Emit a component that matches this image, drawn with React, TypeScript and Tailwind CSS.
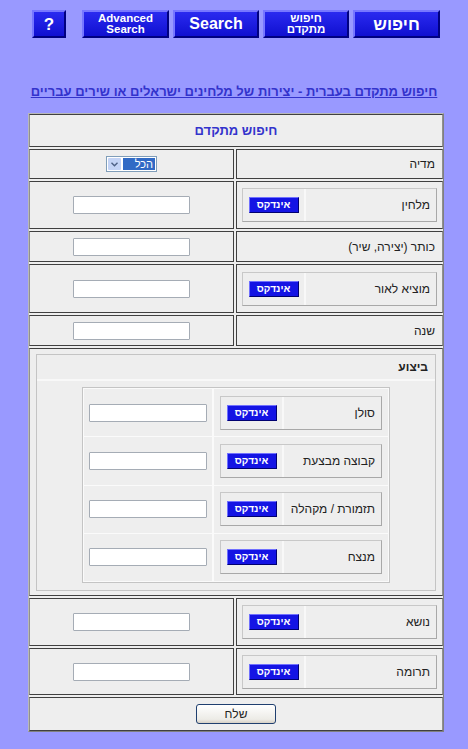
import React from "react"

const font = { fontFamily: '"Liberation Sans", Arial, "DejaVu Sans", sans-serif' }

function NavButton({ children, className = "" }: { children: React.ReactNode; className?: string }) {
  return (
    <div
      className={
        "flex h-[28px] flex-col items-center justify-center border-2 border-t-[#7777ff] border-l-[#7777ff] border-b-[#000080] border-r-[#000080] bg-[linear-gradient(#2a2af0,#1010d0)] font-bold text-white " +
        className
      }
    >
      {children}
    </div>
  )
}

function IndexButton() {
  return (
    <span className="flex h-[16px] w-[50px] items-center justify-center border border-t-[#7070ff] border-l-[#7070ff] border-b-[#000070] border-r-[#000070] bg-[#1414e4] text-[10px] font-bold leading-none text-white">
      אינדקס
    </span>
  )
}

function LabelBox({ label }: { label: string }) {
  return (
    <div className="flex h-[34px] w-full border border-t-[#c8c8c8] border-l-[#c8c8c8] border-b-[#a8a8a8] border-r-[#a8a8a8] bg-[#eeeeee]">
      <div className="flex flex-1 items-center whitespace-nowrap px-[6px] text-[12px] text-[#222]">{label}</div>
      <div className="flex w-[63px] shrink-0 items-center justify-center border-r-2 border-[#f8f8f8]">
        <IndexButton />
      </div>
    </div>
  )
}

function TextInput({ w = "w-[117px]" }: { w?: string }) {
  return <div className={"h-[18px] rounded-[1px] border border-[#a5acb5] bg-white " + w} />
}

function MediaSelect() {
  return (
    <div className="flex h-[16px] w-[51px] items-center border border-[#7f9db9] bg-white p-[1px]" dir="ltr">
      <div className="flex h-full w-[13px] items-center justify-center rounded-[1px] bg-[#c3d3f5]">
        <svg width="7" height="5" viewBox="0 0 7 5">
          <path d="M0.5 0.8 L3.5 3.8 L6.5 0.8" stroke="#4d6185" strokeWidth="1.4" fill="none" />
        </svg>
      </div>
      <div className="ml-[2px] flex h-full flex-1 items-center justify-end bg-[#316ac5] px-[2px] text-[11px] leading-none text-white">
        הכל
      </div>
    </div>
  )
}

const cellBase = "border border-y-[#404040] bg-[#eeeeee]"

function Row({
  h,
  label,
  index,
  control,
}: {
  h: string
  label: string
  index?: boolean
  control: React.ReactNode
}) {
  return (
    <div className={"flex gap-[2px] " + h}>
      <div className={cellBase + " flex w-[207px] items-center border-r-[#909090] border-l-[#404040] " + (index ? "px-[5px]" : "px-[7px]")}>
        {index ? <LabelBox label={label} /> : <span className="text-[12px] text-[#222]">{label}</span>}
      </div>
      <div className={cellBase + " flex flex-1 items-center justify-center border-l-[#909090] border-r-[#404040]"}>
        {control}
      </div>
    </div>
  )
}

const performers = ["סולן", "קבוצה מבצעת", "תזמורת / מקהלה", "מנצח"]

export default function App() {
  return (
    <div className="h-[749px] w-[468px] overflow-hidden bg-[#9999ff]" style={font}>
      {/* top navigation buttons */}
      <div className="flex pl-[32px] pt-[10px]" dir="ltr">
        <NavButton className="w-[34px] text-[17px] leading-none">?</NavButton>
        <NavButton className="ml-[16px] w-[87px] text-[11.5px] leading-[11px]">
          <span>Advanced</span>
          <span>Search</span>
        </NavButton>
        <NavButton className="ml-[4px] w-[86px] text-[16px] leading-none">Search</NavButton>
        <NavButton className="ml-[4px] w-[86px] text-[11.5px] leading-[11px]">
          <span>חיפוש</span>
          <span>מתקדם</span>
        </NavButton>
        <NavButton className="ml-[4px] w-[87px] text-[17px] leading-none">חיפוש</NavButton>
      </div>

      <div className="mt-[46px] h-[16px] text-center text-[13px] font-bold leading-[16px] text-[#3333cc] underline" dir="rtl">
        חיפוש מתקדם בעברית - יצירות של מלחינים ישראלים או שירים עבריים
      </div>

      {/* search form */}
      <div className="ml-[28px] mt-[13px] w-[416px] border border-t-[#b8b8b8] border-l-[#b8b8b8] border-b-[#808080] border-r-[#808080] bg-[#eeeeee]" dir="rtl">
        <div className="flex flex-col gap-[2px]">
          <div className={cellBase + " flex h-[33px] items-center justify-center border-x-[#909090]"}>
            <span className="text-[13px] font-bold text-[#3333cc]">חיפוש מתקדם</span>
          </div>

          <Row h="h-[30px]" label="מדיה" control={<MediaSelect />} />
          <Row h="h-[48px]" label="מלחין" index control={<TextInput />} />
          <Row h="h-[31px]" label="כותר (יצירה, שיר)" control={<TextInput />} />
          <Row h="h-[49px]" label="מוציא לאור" index control={<TextInput />} />
          <Row h="h-[31px]" label="שנה" control={<TextInput />} />

          <div className={cellBase + " h-[248px] border-x-[#909090] px-[6px] pt-[5px]"}>
            <div className="flex h-[237px] flex-col border border-[#c4c4c4] bg-[#f8f8f8]">
              <div className="flex h-[24px] items-center bg-[#eeeeee] px-[7px] text-[12px] font-bold text-[#222]">ביצוע</div>
              <div className="mt-[2px] flex flex-1 justify-center bg-[#eeeeee] pt-[6px]">
                <div className="flex h-[196px] w-[308px] flex-col gap-[1px] border border-[#c4c4c4] bg-[#fafafa] p-[1px]">
                  {performers.map((p) => (
                    <div key={p} className="flex flex-1 gap-[2px]">
                      <div className="flex w-[174px] items-center bg-[#eeeeee] px-[6px]">
                        <LabelBox label={p} />
                      </div>
                      <div className="flex flex-1 items-center justify-center bg-[#eeeeee]">
                        <TextInput w="w-[118px]" />
                      </div>
                    </div>
                  ))}
                </div>
              </div>
            </div>
          </div>

          <Row h="h-[48px]" label="נושא" index control={<TextInput />} />
          <Row h="h-[47px]" label="תרומה" index control={<TextInput />} />

          <div className={cellBase + " flex h-[34px] items-center justify-center border-x-[#909090]"}>
            <button className="flex h-[20px] w-[80px] items-center justify-center rounded-[3px] border border-[#1f3f6f] bg-[linear-gradient(#ffffff,#ecebe6_80%,#d6d0c5)] text-[12px] leading-none text-[#222]" style={font}>
              שלח
            </button>
          </div>
        </div>
      </div>
    </div>
  )
}
